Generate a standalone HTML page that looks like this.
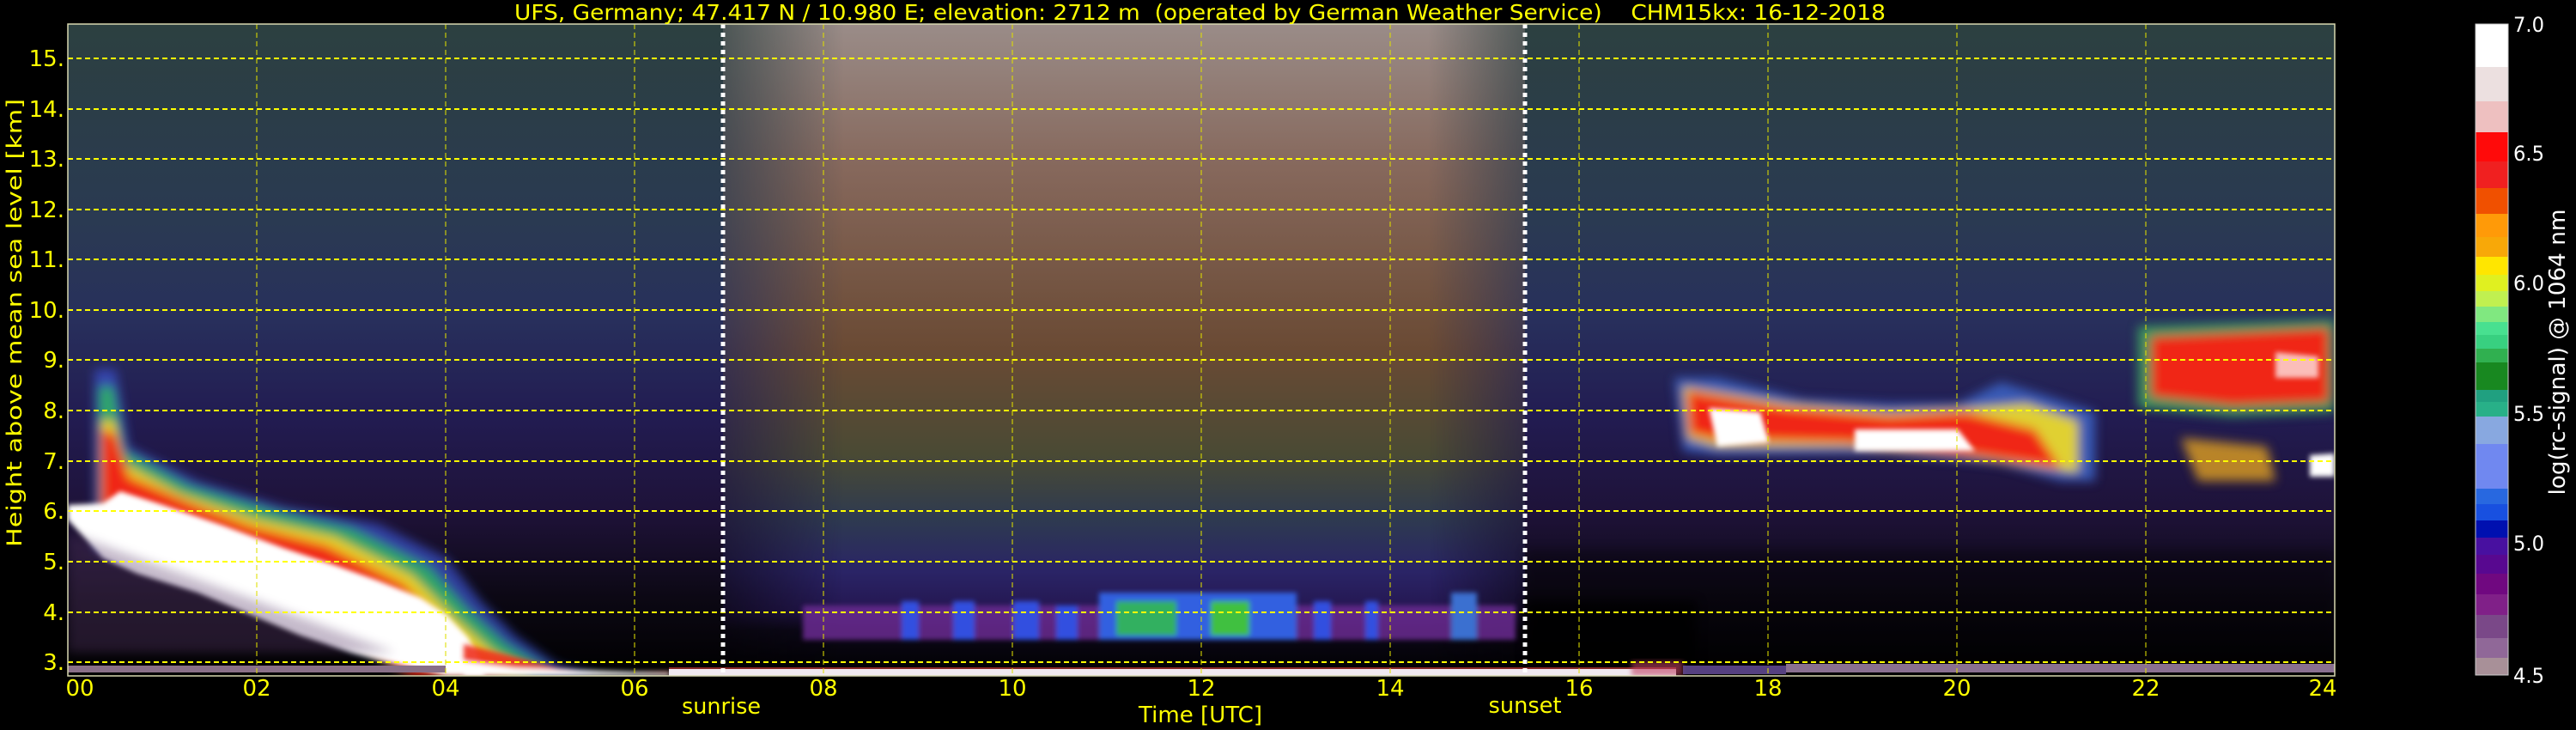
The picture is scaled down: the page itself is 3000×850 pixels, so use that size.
<!DOCTYPE html>
<html><head><meta charset="utf-8"><style>
html,body{margin:0;padding:0;background:#000;}
svg{display:block;}
text{font-family:"DejaVu Sans","Liberation Sans",sans-serif;}
</style></head><body>
<svg width="3000" height="850" viewBox="0 0 3000 850" xmlns="http://www.w3.org/2000/svg">
<defs>
<linearGradient id="night" x1="0" y1="28" x2="0" y2="787" gradientUnits="userSpaceOnUse">
<stop offset="0" stop-color="#2c4040"/>
<stop offset="0.3" stop-color="#2a3a52"/>
<stop offset="0.45" stop-color="#28305c"/>
<stop offset="0.6" stop-color="#221c52"/>
<stop offset="0.75" stop-color="#1e1238"/>
<stop offset="0.88" stop-color="#0c0814"/>
<stop offset="1" stop-color="#000"/>
</linearGradient>
<linearGradient id="day" x1="0" y1="28" x2="0" y2="787" gradientUnits="userSpaceOnUse">
<stop offset="0" stop-color="#9a8c88"/>
<stop offset="0.22" stop-color="#86685c"/>
<stop offset="0.5" stop-color="#6a4a34"/>
<stop offset="0.66" stop-color="#4a4a34"/>
<stop offset="0.76" stop-color="#2e3a50"/>
<stop offset="0.84" stop-color="#2a2466"/>
<stop offset="0.9" stop-color="#241650"/>
<stop offset="0.93" stop-color="#0c0818"/>
<stop offset="1" stop-color="#000"/>
</linearGradient>
<linearGradient id="dayfade" x1="842" y1="0" x2="1776" y2="0" gradientUnits="userSpaceOnUse">
<stop offset="0" stop-color="#fff" stop-opacity="0.3"/>
<stop offset="0.15" stop-color="#fff" stop-opacity="1"/>
<stop offset="0.88" stop-color="#fff" stop-opacity="1"/>
<stop offset="1" stop-color="#fff" stop-opacity="0.35"/>
</linearGradient>
<mask id="dm"><rect x="842" y="28" width="934" height="760" fill="url(#dayfade)"/></mask>
<filter id="bl" x="-20%" y="-20%" width="140%" height="140%"><feGaussianBlur stdDeviation="6"/></filter>
<filter id="bl2" x="-20%" y="-20%" width="140%" height="140%"><feGaussianBlur stdDeviation="3"/></filter>
<clipPath id="plot"><rect x="79" y="28" width="2640" height="759"/></clipPath>
</defs>

<g clip-path="url(#plot)">
<rect x="79" y="28" width="2640" height="759" fill="url(#night)"/>
<rect x="842" y="28" width="934" height="759" fill="url(#day)" mask="url(#dm)"/>
<rect x="1776" y="640" width="943" height="147" fill="#000" opacity="0.3" filter="url(#bl)"/>
<rect x="1776" y="700" width="200" height="87" fill="#000" opacity="0.8" filter="url(#bl)"/>

<g filter="url(#bl)">
<path d="M110,430 L135,430 L150,520 L230,560 L330,590 L440,610 L520,650 L560,700 L600,740 L650,775 L700,787 L480,787 L300,700 L110,640 Z" fill="#3a50c8" opacity="0.75"/>
<path d="M115,450 L132,450 L145,525 L220,565 L320,595 L410,615 L500,660 L545,710 L590,750 L640,780 L480,787 L300,690 L115,630 Z" fill="#30b060" opacity="0.9"/>
<path d="M117,490 L133,490 L145,540 L210,575 L300,605 L390,625 L480,670 L530,720 L575,760 L620,785 L480,787 L300,680 L117,620 Z" fill="#e8d020"/>
<path d="M118,500 L134,505 L150,555 L220,585 L290,612 L380,635 L470,680 L520,730 L560,770 L600,787 L480,787 L300,670 L118,615 Z" fill="#f02818"/>
</g>
<g filter="url(#bl2)">
<path d="M79,588 L120,586 L140,572 L190,588 L260,612 L330,638 L390,658 L440,676 L490,696 L520,716 L545,742 L560,770 L565,787 L520,787 L470,775 L410,760 L350,740 L290,715 L230,690 L160,668 L120,650 L79,605 Z" fill="#fff"/>
</g>
<g filter="url(#bl2)">
<path d="M540,750 L600,765 L650,778 L700,783 L780,782 L780,787 L540,787 Z" fill="#f03020" opacity="0.9"/>
<path d="M540,770 L600,778 L780,784 L780,787 L540,787 Z" fill="#fff"/>
</g>
<path d="M79,620 L300,700 L460,760 L79,760 Z" fill="#5a3a6a" opacity="0.35" filter="url(#bl)"/>
<rect x="79" y="775" width="440" height="8" fill="#8a7088"/>

<g filter="url(#bl2)">
<rect x="935" y="705" width="830" height="40" fill="#6a2a90" opacity="0.85"/>
<rect x="1050" y="700" width="20" height="45" fill="#3050e0"/>
<rect x="1110" y="700" width="25" height="45" fill="#3050e0"/>
<rect x="1180" y="700" width="30" height="45" fill="#3050e0"/>
<rect x="1230" y="705" width="25" height="40" fill="#3050e0"/>
<rect x="1280" y="690" width="120" height="55" fill="#3060e0"/>
<rect x="1300" y="700" width="70" height="40" fill="#30b060"/>
<rect x="1400" y="690" width="110" height="55" fill="#3060e0"/>
<rect x="1410" y="700" width="45" height="40" fill="#40c040"/>
<rect x="1530" y="700" width="20" height="45" fill="#3050e0"/>
<rect x="1590" y="700" width="15" height="45" fill="#3050e0"/>
<rect x="1690" y="690" width="30" height="55" fill="#3a70d0"/>
</g>
<rect x="779" y="779" width="1173" height="8" fill="#f0e8f0"/>
<rect x="779" y="777" width="1173" height="2" fill="#e04040" opacity="0.6"/>
<rect x="1900" y="770" width="60" height="17" fill="#c04060" opacity="0.6" filter="url(#bl2)"/>
<rect x="2080" y="773" width="639" height="10" fill="#8a7090"/>
<rect x="1960" y="775" width="120" height="10" fill="#6a50a0" opacity="0.8"/>

<g filter="url(#bl)">
<path d="M1950,440 L2000,440 L2100,465 L2200,470 L2280,470 L2330,445 L2380,460 L2440,480 L2440,560 L2400,560 L2330,540 L2200,528 L2000,530 L1960,525 Z" fill="#3a60c0" opacity="0.9"/>
<path d="M1960,450 L2080,470 L2200,480 L2300,475 L2360,470 L2420,490 L2420,550 L2380,545 L2280,530 L2150,520 L2000,520 L1965,510 Z" fill="#e0d030"/>
<path d="M1965,455 L2080,475 L2200,485 L2290,480 L2370,500 L2400,545 L2300,530 L2150,515 L2000,512 L1968,505 Z" fill="#f02818"/>
<path d="M2490,380 L2719,372 L2719,480 L2600,485 L2490,475 Z" fill="#40b060" opacity="0.8"/>
<path d="M2505,392 L2712,382 L2712,468 L2600,472 L2505,462 Z" fill="#f02818"/>
<path d="M2540,510 L2640,520 L2650,560 L2560,560 Z" fill="#e0a020" opacity="0.8"/>
</g>
<g filter="url(#bl2)">
<path d="M1990,475 L2050,480 L2060,515 L2000,520 Z" fill="#fff"/>
<path d="M2160,500 L2280,500 L2300,525 L2160,525 Z" fill="#fff"/>
<path d="M2650,410 L2700,415 L2700,440 L2650,440 Z" fill="#fff" opacity="0.7"/>
<path d="M2690,530 L2719,528 L2719,555 L2690,555 Z" fill="#fff"/>
</g>

<g stroke="#ffff00" stroke-width="2" stroke-dasharray="6,4">
<line x1="79" y1="771" x2="2719" y2="771"/>
<line x1="79" y1="713" x2="2719" y2="713"/>
<line x1="79" y1="654" x2="2719" y2="654"/>
<line x1="79" y1="595" x2="2719" y2="595"/>
<line x1="79" y1="537" x2="2719" y2="537"/>
<line x1="79" y1="478" x2="2719" y2="478"/>
<line x1="79" y1="419" x2="2719" y2="419"/>
<line x1="79" y1="361" x2="2719" y2="361"/>
<line x1="79" y1="302" x2="2719" y2="302"/>
<line x1="79" y1="244" x2="2719" y2="244"/>
<line x1="79" y1="185" x2="2719" y2="185"/>
<line x1="79" y1="127" x2="2719" y2="127"/>
<line x1="79" y1="68" x2="2719" y2="68"/>
</g>
<g stroke="#e0e000" stroke-width="1.5" stroke-dasharray="6,4" opacity="0.7">
<line x1="299" y1="28" x2="299" y2="787"/>
<line x1="519" y1="28" x2="519" y2="787"/>
<line x1="739" y1="28" x2="739" y2="787"/>
<line x1="959" y1="28" x2="959" y2="787"/>
<line x1="1179" y1="28" x2="1179" y2="787"/>
<line x1="1399" y1="28" x2="1399" y2="787"/>
<line x1="1619" y1="28" x2="1619" y2="787"/>
<line x1="1839" y1="28" x2="1839" y2="787"/>
<line x1="2059" y1="28" x2="2059" y2="787"/>
<line x1="2279" y1="28" x2="2279" y2="787"/>
<line x1="2499" y1="28" x2="2499" y2="787"/>
</g>
<g stroke="#fff" stroke-width="5" stroke-dasharray="5,5">
<line x1="842" y1="28" x2="842" y2="787"/>
<line x1="1776" y1="28" x2="1776" y2="787"/>
</g>
</g>
<rect x="79" y="28" width="2640" height="759" fill="none" stroke="#d8d8b0" stroke-width="1.5"/>

<text x="599" y="23" font-size="25" fill="#ffff00" textLength="1597" lengthAdjust="spacingAndGlyphs" xml:space="preserve">UFS, Germany; 47.417 N / 10.980 E; elevation: 2712 m&#160; (operated by German Weather Service)&#160; &#160; CHM15kx: 16-12-2018</text>

<g font-size="26" fill="#ffff00" text-anchor="end">
<text x="75" y="780">3.</text>
<text x="75" y="722">4.</text>
<text x="75" y="663">5.</text>
<text x="75" y="604">6.</text>
<text x="75" y="546">7.</text>
<text x="75" y="487">8.</text>
<text x="75" y="428">9.</text>
<text x="75" y="370">10.</text>
<text x="75" y="311">11.</text>
<text x="75" y="253">12.</text>
<text x="75" y="194">13.</text>
<text x="75" y="136">14.</text>
<text x="75" y="77">15.</text>
</g>
<text transform="translate(25,376) rotate(-90)" font-size="24" fill="#ffff00" text-anchor="middle" textLength="522" lengthAdjust="spacingAndGlyphs">Height above mean sea level [km]</text>

<g font-size="26" fill="#ffff00" text-anchor="middle">
<text x="93" y="810">00</text>
<text x="299" y="810">02</text>
<text x="519" y="810">04</text>
<text x="739" y="810">06</text>
<text x="959" y="810">08</text>
<text x="1179" y="810">10</text>
<text x="1399" y="810">12</text>
<text x="1619" y="810">14</text>
<text x="1839" y="810">16</text>
<text x="2059" y="810">18</text>
<text x="2279" y="810">20</text>
<text x="2499" y="810">22</text>
<text x="2705" y="810">24</text>
<text x="840" y="831" textLength="92" lengthAdjust="spacingAndGlyphs">sunrise</text>
<text x="1776" y="830" textLength="85" lengthAdjust="spacingAndGlyphs">sunset</text>
<text x="1398" y="841" textLength="144" lengthAdjust="spacingAndGlyphs">Time [UTC]</text>
</g>

<g>
<rect x="2883" y="28" width="38" height="50" fill="#ffffff"/>
<rect x="2883" y="78" width="38" height="40" fill="#ece0e0"/>
<rect x="2883" y="118" width="38" height="36" fill="#eec0c0"/>
<rect x="2883" y="154" width="38" height="34" fill="#ff0a0a"/>
<rect x="2883" y="188" width="38" height="31" fill="#f02020"/>
<rect x="2883" y="219" width="38" height="30" fill="#f05000"/>
<rect x="2883" y="249" width="38" height="27" fill="#ff9a08"/>
<rect x="2883" y="276" width="38" height="23" fill="#f8a808"/>
<rect x="2883" y="299" width="38" height="21" fill="#ffe600"/>
<rect x="2883" y="320" width="38" height="19" fill="#e0f020"/>
<rect x="2883" y="339" width="38" height="18" fill="#c0f050"/>
<rect x="2883" y="357" width="38" height="18" fill="#80e880"/>
<rect x="2883" y="375" width="38" height="15" fill="#48e090"/>
<rect x="2883" y="390" width="38" height="16" fill="#38d080"/>
<rect x="2883" y="406" width="38" height="16" fill="#30b050"/>
<rect x="2883" y="422" width="38" height="32" fill="#188820"/>
<rect x="2883" y="454" width="38" height="14" fill="#20a080"/>
<rect x="2883" y="468" width="38" height="17" fill="#28b088"/>
<rect x="2883" y="485" width="38" height="32" fill="#88a8e0"/>
<rect x="2883" y="517" width="38" height="52" fill="#7088f0"/>
<rect x="2883" y="569" width="38" height="18" fill="#2868e0"/>
<rect x="2883" y="587" width="38" height="19" fill="#1850e0"/>
<rect x="2883" y="606" width="38" height="20" fill="#0010b0"/>
<rect x="2883" y="626" width="38" height="20" fill="#4810a0"/>
<rect x="2883" y="646" width="38" height="22" fill="#580890"/>
<rect x="2883" y="668" width="38" height="24" fill="#700880"/>
<rect x="2883" y="692" width="38" height="24" fill="#802088"/>
<rect x="2883" y="716" width="38" height="27" fill="#7a4888"/>
<rect x="2883" y="743" width="38" height="23" fill="#906898"/>
<rect x="2883" y="766" width="38" height="20" fill="#a89098"/>
<rect x="2883" y="28" width="38" height="758" fill="none" stroke="#ccc" stroke-width="1"/>
</g>
<g font-size="24" fill="#ffffff">
<text x="2927" y="37" textLength="36" lengthAdjust="spacingAndGlyphs">7.0</text>
<text x="2927" y="187" textLength="36" lengthAdjust="spacingAndGlyphs">6.5</text>
<text x="2927" y="338" textLength="36" lengthAdjust="spacingAndGlyphs">6.0</text>
<text x="2927" y="490" textLength="36" lengthAdjust="spacingAndGlyphs">5.5</text>
<text x="2927" y="641" textLength="36" lengthAdjust="spacingAndGlyphs">5.0</text>
<text x="2927" y="795" textLength="36" lengthAdjust="spacingAndGlyphs">4.5</text>
</g>
<text transform="translate(2987,410) rotate(-90)" font-size="26" fill="#ffffff" text-anchor="middle" textLength="333" lengthAdjust="spacingAndGlyphs">log(rc-signal) @ 1064 nm</text>
</svg>
</body></html>
